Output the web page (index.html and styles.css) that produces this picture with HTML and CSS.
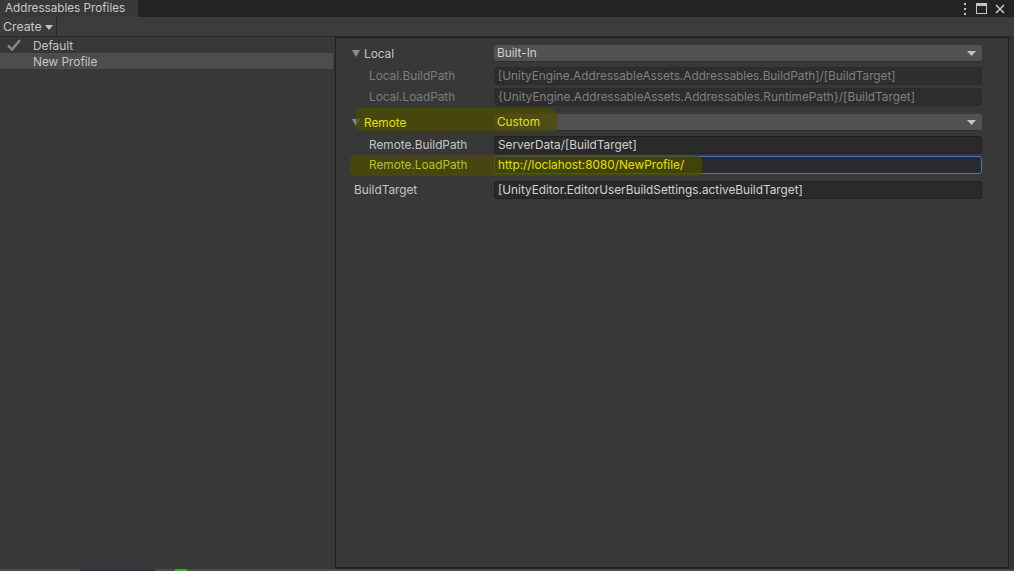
FILE: index.html
```html
<!DOCTYPE html>
<html>
<head>
<meta charset="utf-8">
<link rel="stylesheet" href="styles.css">
</head>
<body>
<div class="window">
  <div class="titlebar">
    <div class="tab">Addressables Profiles</div>
    <div class="winicons">
      <svg class="kebab" width="4" height="12" viewBox="0 0 4 12"><rect x="1" y="0" width="2" height="2" fill="#c4c4c4"/><rect x="1" y="5" width="2" height="2" fill="#c4c4c4"/><rect x="1" y="10" width="2" height="2" fill="#c4c4c4"/></svg>
      <svg class="maxi" width="11" height="11" viewBox="0 0 11 11"><rect x="0.5" y="0.5" width="10" height="10" fill="none" stroke="#c4c4c4"/><rect x="0" y="0" width="11" height="3" fill="#c4c4c4"/></svg>
      <svg class="close" width="10" height="10" viewBox="0 0 10 10"><path d="M1 1L9 9M9 1L1 9" stroke="#c4c4c4" stroke-width="1.6"/></svg>
    </div>
  </div>
  <div class="toolbar">
    <div class="create">Create <svg width="8" height="5" viewBox="0 0 8 5"><path d="M0 0H8L4 5Z" fill="#c4c4c4"/></svg></div>
  </div>
  <div class="main">
    <div class="left">
      <div class="item"><svg class="check" width="14" height="12" viewBox="0 0 14 12"><path d="M1 6.5L5 10.5L13 1" stroke="#8a8a8a" stroke-width="2.4" fill="none"/></svg><span>Default</span></div>
      <div class="item selected"><span>New Profile</span></div>
    </div>
    <div class="right">
      <div class="hl hl1"></div>
      <div class="hl hl2"></div>
      <div class="row r1">
        <div class="label fold"><svg class="tri" width="8" height="7" viewBox="0 0 8 7"><path d="M0 0H8L4 7Z" fill="#8c8c8c"/></svg><span class="txt">Local</span></div>
        <div class="dropdown"><span class="txt">Built-In</span><svg width="9" height="5" viewBox="0 0 9 5"><path d="M0 0H9L4.5 5Z" fill="#c4c4c4"/></svg></div>
      </div>
      <div class="row r2">
        <div class="label sub dim"><span class="txt">Local.BuildPath</span></div>
        <div class="field dimfield"><span class="txt">[UnityEngine.AddressableAssets.Addressables.BuildPath]/[BuildTarget]</span></div>
      </div>
      <div class="row r3">
        <div class="label sub dim"><span class="txt">Local.LoadPath</span></div>
        <div class="field dimfield"><span class="txt">{UnityEngine.AddressableAssets.Addressables.RuntimePath}/[BuildTarget]</span></div>
      </div>
      <div class="row r4">
        <div class="label fold yellow"><svg class="tri" width="8" height="7" viewBox="0 0 8 7"><path d="M0 0H8L4 7Z" fill="#8c8c8c"/></svg><span class="txt">Remote</span></div>
        <div class="dropdown"><span class="txt yellow">Custom</span><svg width="9" height="5" viewBox="0 0 9 5"><path d="M0 0H9L4.5 5Z" fill="#c4c4c4"/></svg></div>
      </div>
      <div class="row r5">
        <div class="label sub"><span class="txt">Remote.BuildPath</span></div>
        <div class="field"><span class="txt">ServerData/[BuildTarget]</span></div>
      </div>
      <div class="row r6">
        <div class="label sub green"><span class="txt">Remote.LoadPath</span></div>
        <div class="field focused"><span class="txt yellow">http://loclahost:8080/NewProfile/</span></div>
      </div>
      <div class="row r7">
        <div class="label top"><span class="txt">BuildTarget</span></div>
        <div class="field"><span class="txt">[UnityEditor.EditorUserBuildSettings.activeBuildTarget]</span></div>
      </div>
    </div>
    <div class="edge"></div>
  </div>
  <div class="taskbar">
    <div class="tb1"></div><div class="tb2"></div><div class="tb3"></div>
  </div>
</div>
</body>
</html>
```
FILE: styles.css
```css
* { box-sizing: border-box; }
html, body { margin: 0; padding: 0; background: #282828; }
body { font-family: Inter, "Noto Sans", sans-serif; font-size: 11.8px; color: #c4c4c4; }
.window { width: 1014px; height: 571px; display: flex; flex-direction: column; overflow: hidden; }

.titlebar { height: 17px; background: #232323; display: flex; align-items: stretch; justify-content: space-between; }
.tab { width: 138px; background: #383838; padding-left: 5px; line-height: 17px; color: #c8c8c8; font-size: 11.7px; }
.winicons { display: flex; align-items: center; gap: 8px; padding-right: 9px; }
.kebab { margin-right: 1px; }

.toolbar { height: 20px; background: #3c3c3c; display: flex; align-items: center; border-bottom: 1px solid #2a2a2a; }
.create { height: 20px; display: flex; align-items: center; gap: 3px; padding: 0 3px; border-right: 1px solid #262626; width: 57px; color: #c8c8c8; font-size: 12.3px; }
.create svg { margin-top: 1px; }

.main { flex: 1; display: flex; background: #383838; }
.left { width: 335px; }
.item { height: 16px; display: flex; align-items: center; padding-left: 33px; padding-top: 1px; position: relative; color: #c4c4c4; margin-right: 2px; }
.item.selected { background: #4d4d4d; }
.check { position: absolute; left: 7px; top: 2px; }

.right { flex: 1; position: relative; border: 1px solid #1f1f1f; border-bottom-width: 2px; padding-top: 5px; }
.edge { width: 5px; background: #333; }

.row { height: 19px; display: flex; align-items: center; margin-right: 26px; }
.r1 { margin-top: 1px; }
.r2 { margin-top: 3px; }
.r3 { margin-top: 2px; }
.r4 { margin-top: 7px; }
.r5 { margin-top: 3px; }
.r6 { margin-top: 1px; }
.r7 { margin-top: 6px; }

.txt { position: relative; z-index: 3; }
.label { width: 158px; flex: none; padding-left: 33px; white-space: nowrap; }
.label.fold { padding-left: 16px; display: flex; align-items: center; }
.tri { margin-right: 4px; }
.label.top { padding-left: 18px; }
.dim { color: #7c7c7c; }
.yellow { color: #e2e200; }
.green { color: #b2c420; }

.dropdown { flex: 1; height: 17px; background: #515151; border-radius: 3px; border-bottom: 1px solid #2e2e2e; display: flex; align-items: center; justify-content: space-between; padding: 0 6px 0 3px; color: #d2d2d2; }
.field { flex: 1; height: 18px; background: #2a2a2a; border: 1px solid #212121; border-radius: 3px; padding-left: 3px; line-height: 16px; color: #d2d2d2; white-space: nowrap; overflow: hidden; }
.dimfield { color: #808080; border-color: #2c2c2c; background: #2d2d2d; }
.field.focused { border-color: #3b7bc0; }

.hl { position: absolute; background: rgba(76, 76, 0, 0.74); z-index: 2; pointer-events: none; }
.hl1 { left: 20px; top: 70px; width: 201px; height: 23px; border-radius: 4px 14px 3px 6px / 4px 6px 3px 6px; }
.hl2 { left: 14px; top: 117px; width: 352px; height: 21px; border-radius: 6px 10px 4px 6px / 5px 6px 4px 5px; }

.taskbar { height: 2px; background: #4e4848; display: flex; }
.tb1 { width: 75px; margin-left: 80px; background: #2a3040; }
.tb2 { width: 12px; margin-left: 20px; background: #2fb02f; }
.tb3 { flex: 1; }
```
